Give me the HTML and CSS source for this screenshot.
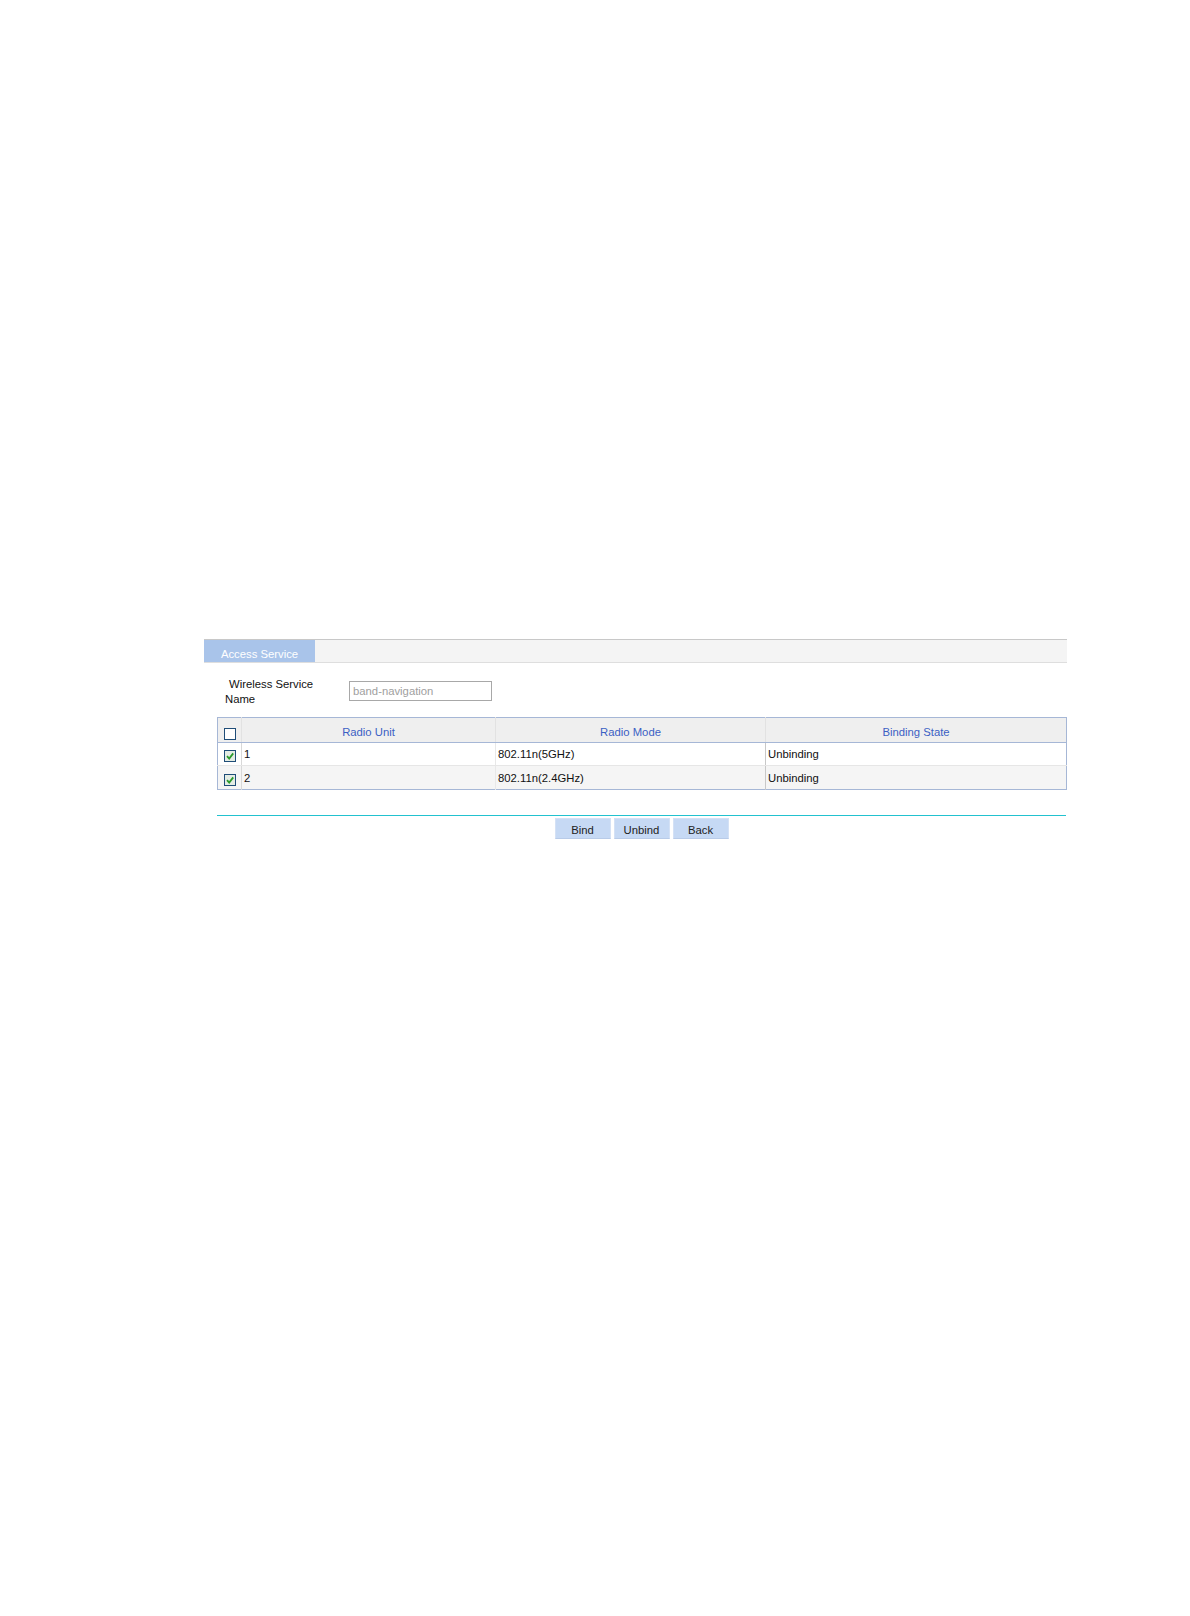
FILE: index.html
```html
<!DOCTYPE html>
<html>
<head>
<meta charset="utf-8">
<link rel="stylesheet" href="styles.css">
</head>
<body>
<div class="panel">
  <div class="tabbar"><div class="tab">Access Service</div></div>
  <div class="formrow">
    <div class="label"><span class="l1">Wireless Service</span><span class="l2">Name</span></div>
    <div class="input">band-navigation</div>
  </div>
  <div class="tablewrap">
    <table class="grid">
      <colgroup><col class="c0"><col class="c1"><col class="c2"><col class="c3"></colgroup>
      <thead>
        <tr><th class="cb"><span class="box"></span></th><th>Radio Unit</th><th>Radio Mode</th><th>Binding State</th></tr>
      </thead>
      <tbody>
        <tr class="r1"><td class="cb"><span class="box on"><svg viewBox="0 0 10 10" width="10" height="10"><path d="M2 5.2 L4.2 7.6 L8.2 2.4" fill="none" stroke="#2a9a2a" stroke-width="1.8"/></svg></span></td><td>1</td><td class="sep">802.11n(5GHz)</td><td class="sep2">Unbinding</td></tr>
        <tr class="r2"><td class="cb"><span class="box on"><svg viewBox="0 0 10 10" width="10" height="10"><path d="M2 5.2 L4.2 7.6 L8.2 2.4" fill="none" stroke="#2a9a2a" stroke-width="1.8"/></svg></span></td><td>2</td><td class="sep">802.11n(2.4GHz)</td><td class="sep2">Unbinding</td></tr>
      </tbody>
    </table>
    <div class="rule"></div>
    <div class="buttons">
      <div class="btn">Bind</div>
      <div class="btn">Unbind</div>
      <div class="btn">Back</div>
    </div>
  </div>
</div>
</body>
</html>
```
FILE: styles.css
```css
html, body { margin: 0; padding: 0; background: #fff; }
body { font-family: "Liberation Sans", Arial, sans-serif; font-size: 11.3px; color: #111; }
.panel { margin-left: 204px; padding-top: 639px; width: 863px; }
.tabbar { height: 22px; border-top: 1px solid #c8c8c8; border-bottom: 1px solid #dedede; background: #f4f4f4; display: flex; }
.tab { width: 111px; background: #a9c4ea; color: #fff; display: flex; align-items: center; justify-content: center; padding-top: 5px; box-sizing: border-box; }
.formrow { display: flex; margin-top: 13px; height: 41px; }
.label { width: 145px; display: flex; flex-direction: column; line-height: 15px; padding-left: 21px; padding-top: 1px; box-sizing: border-box; }
.l1 { padding-left: 4px; }
.input { margin-top: 5px; width: 143px; height: 20px; box-sizing: border-box; border: 1px solid #a8a8a8; color: #a0a0a0; padding-left: 3px; line-height: 18px; }
.tablewrap { margin-left: 13px; width: 849px; }
.grid { border-collapse: collapse; width: 849px; table-layout: fixed; border: 1px solid #a6b7d6; }
.c0 { width: 24px; } .c1 { width: 254px; } .c2 { width: 270px; } .c3 { width: 301px; }
th { height: 21px; background: #efefef; color: #3c5fc4; font-weight: normal; padding: 3px 0 0 0; border-bottom: 1px solid #a6b7d6; border-left: 1px solid #e2e2e2; line-height: 14px; }
th.cb { border-left: none; }
td { height: 22px; padding: 0 0 0 2px; vertical-align: middle; line-height: 14px; }
.r1 td { background: #fff; border-bottom: 1px solid #e6e6e6; }
.r2 td { background: #f5f5f5; height: 23px; }
td.cb { border-right: 1px solid #d8d8d8; padding: 0; }
td.sep { border-left: 1px solid #e8e8e8; }
td.sep2 { border-left: 1px solid #c8c8c8; }
.cb { text-align: center; }
.box { display: inline-block; width: 12px; height: 12px; border: 1px solid #1f4d78; box-sizing: border-box; background: #fff; vertical-align: middle; position: relative; top: 1px; }
.box.on { background: #e4ece4; }
.box svg { display: block; margin: 0; width: 10px; height: 10px; }
.rule { margin-top: 25px; height: 1px; background: #22c2cf; }
.buttons { display: flex; justify-content: center; gap: 3px; margin-top: 2px; }
.btn { width: 56px; height: 21px; background: #c6d9f4; border: 1px solid #d4e1f5; border-bottom-color: #b8cbe8; box-sizing: border-box; display: flex; align-items: center; justify-content: center; color: #222; padding-top: 2px; }
```
